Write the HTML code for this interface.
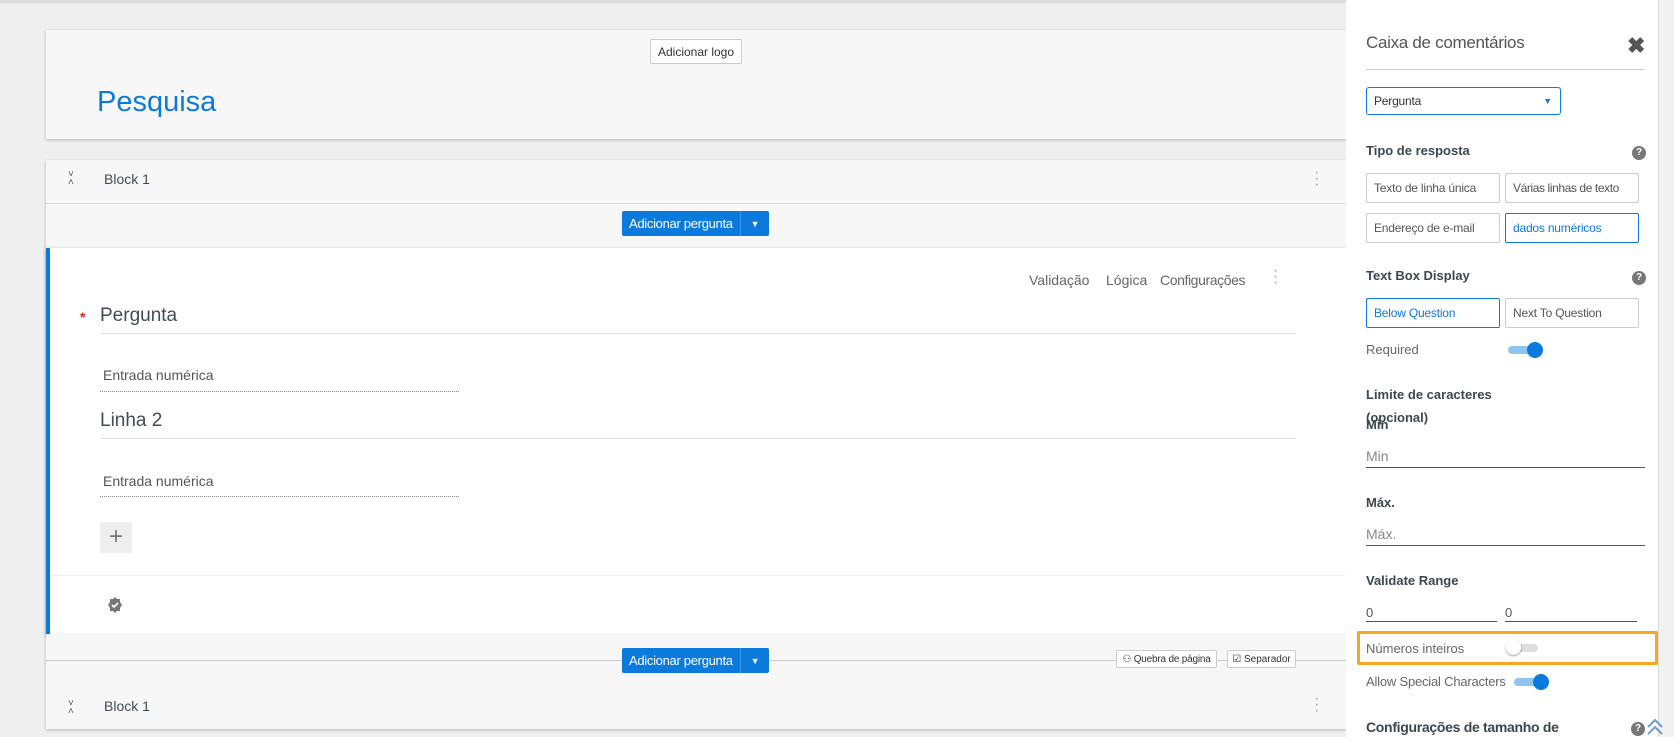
<!DOCTYPE html>
<html><head><meta charset="utf-8"><style>
*{box-sizing:border-box;margin:0;padding:0}
body{width:1674px;height:737px;overflow:hidden;background:#efefef;font-family:"Liberation Sans",sans-serif;color:#404b57;position:relative}
.a{position:absolute;white-space:nowrap}
.card{background:#f7f7f7;box-shadow:0 1px 3px rgba(0,0,0,.25)}
.btn{background:#fff;border:1px solid #ccc;border-radius:2px;font-size:12px;color:#333;display:flex;align-items:center;justify-content:center}
.add{background:#0a7bdc;color:#fff;font-size:13px;border-radius:2px;display:flex;align-items:center}
.lbl{font-size:13px;font-weight:bold;color:#3c4650}
.opt{border:1px solid #ccc;border-radius:2px;font-size:12px;color:#555;padding-left:7px;display:flex;align-items:center;background:#fff;letter-spacing:-.2px}
.sel{border-color:#0a7bdc;color:#0a7bdc}
.q{width:14px;height:14px;border-radius:50%;background:#777;color:#fff;font-size:10px;font-weight:bold;text-align:center;line-height:14px}
.line{height:1px;background:#555}
.ph{font-size:14px;color:#888}
</style></head><body>
<div class="a" style="left:0;top:0;width:1674px;height:3px;background:#ddd"></div>
<div class="a card" style="left:46px;top:30px;width:1300px;height:109px"></div>
<div class="a btn" style="left:650px;top:39px;width:92px;height:25px">Adicionar logo</div>
<div class="a" style="left:97px;top:86px;font-size:29px;color:#0a7bdc">Pesquisa</div>
<div class="a card" style="left:46px;top:160px;width:1300px;height:475px"></div>
<div class="a" style="left:46px;top:203px;width:1300px;height:1px;background:#ddd"></div>
<div class="a" style="left:68px;top:171px;font-size:10px;line-height:8px;color:#555">˅<br>˄</div>
<div class="a" style="left:104px;top:171px;font-size:14px">Block 1</div>
<div class="a" style="left:1314px;top:170px;width:3px;line-height:6px;font-size:16px;color:#aaa">·<br>·<br>·</div>
<div class="a add" style="left:622px;top:211px;width:147px;height:25px;letter-spacing:-.3px"><span style="padding:0 7px;border-right:1px solid #3a95e4;line-height:25px">Adicionar pergunta</span><span style="flex:1;text-align:center;font-size:9px">▼</span></div>
<div class="a" style="left:46px;top:248px;width:1300px;height:386px;background:#fff;border-left:4px solid #0a7bdc;box-shadow:0 1px 3px rgba(0,0,0,.3)"></div>
<div class="a" style="left:1029px;top:272px;font-size:14px;color:#666">Validação</div>
<div class="a" style="left:1106px;top:272px;font-size:14px;color:#666">Lógica</div>
<div class="a" style="left:1160px;top:272px;font-size:14px;color:#666;letter-spacing:-.4px">Configurações</div>
<div class="a" style="left:1273px;top:268px;width:3px;line-height:6px;font-size:16px;color:#aaa">·<br>·<br>·</div>
<div class="a" style="left:80px;top:309px;color:#e22;font-size:14px;font-weight:bold">*</div>
<div class="a" style="left:100px;top:305px;font-size:19px">Pergunta</div>
<div class="a" style="left:100px;top:333px;width:1196px;height:1px;background:#e2e2e2"></div>
<div class="a" style="left:103px;top:367px;font-size:14px;color:#555">Entrada numérica</div>
<div class="a" style="left:100px;top:391px;width:359px;border-top:1px dotted #888"></div>
<div class="a" style="left:100px;top:410px;font-size:19px">Linha 2</div>
<div class="a" style="left:100px;top:438px;width:1196px;height:1px;background:#e2e2e2"></div>
<div class="a" style="left:103px;top:473px;font-size:14px;color:#555">Entrada numérica</div>
<div class="a" style="left:100px;top:496px;width:359px;border-top:1px dotted #888"></div>
<div class="a" style="left:100px;top:522px;width:32px;height:31px;background:#eee;color:#777;font-size:24px;text-align:center;line-height:30px">+</div>
<div class="a" style="left:50px;top:575px;width:1296px;height:1px;background:#eee"></div>
<svg class="a" style="left:107px;top:597px" width="16" height="16" viewBox="0 0 16 16"><path d="M8 0l2 2 3 0 0 3 2 3-2 3 0 3-3 0-2 2-2-2-3 0 0-3-2-3 2-3 0-3 3 0z" fill="#777"/><path d="M5 8l2 2 4-4" stroke="#fff" stroke-width="1.6" fill="none"/></svg>
<div class="a" style="left:46px;top:634px;width:1300px;height:95px;background:#f7f7f7;box-shadow:0 1px 3px rgba(0,0,0,.25)"></div>
<div class="a" style="left:46px;top:660px;width:1300px;height:1px;background:#ccc"></div>
<div class="a add" style="left:622px;top:648px;width:147px;height:25px;letter-spacing:-.3px"><span style="padding:0 7px;border-right:1px solid #3a95e4;line-height:25px">Adicionar pergunta</span><span style="flex:1;text-align:center;font-size:9px">▼</span></div>
<div class="a btn" style="left:1116px;top:650px;width:101px;height:18px;font-size:10px;letter-spacing:-.2px">⚇ Quebra de página</div>
<div class="a btn" style="left:1227px;top:650px;width:69px;height:18px;font-size:10px">☑ Separador</div>
<div class="a" style="left:68px;top:700px;font-size:10px;line-height:8px;color:#555">˅<br>˄</div>
<div class="a" style="left:104px;top:698px;font-size:14px">Block 1</div>
<div class="a" style="left:1314px;top:696px;width:3px;line-height:6px;font-size:16px;color:#aaa">·<br>·<br>·</div>
<div class="a" style="left:1346px;top:0;width:312px;height:737px;background:#fff"></div>
<div class="a" style="left:1658px;top:0;width:16px;height:737px;background:#f1f1f1;border-left:1px solid #ddd"></div>
<div class="a" style="left:1366px;top:33px;font-size:17px;color:#555;letter-spacing:-.3px">Caixa de comentários</div>
<div class="a" style="left:1627px;top:33px;font-size:22px;color:#555;font-weight:bold">✖</div>
<div class="a" style="left:1366px;top:69px;width:279px;height:1px;background:#ccc"></div>
<div class="a opt sel" style="left:1366px;top:87px;width:195px;height:28px;color:#333;border-radius:3px">Pergunta<span style="position:absolute;right:8px;color:#0a7bdc;font-size:9px">▼</span></div>
<div class="a lbl" style="left:1366px;top:143px">Tipo de resposta</div>
<div class="a q" style="left:1632px;top:146px">?</div>
<div class="a opt" style="left:1366px;top:173px;width:134px;height:30px">Texto de linha única</div>
<div class="a opt" style="left:1505px;top:173px;width:134px;height:30px;letter-spacing:-.4px">Várias linhas de texto</div>
<div class="a opt" style="left:1366px;top:213px;width:134px;height:30px">Endereço de e-mail</div>
<div class="a opt sel" style="left:1505px;top:213px;width:134px;height:30px">dados numéricos</div>
<div class="a lbl" style="left:1366px;top:268px">Text Box Display</div>
<div class="a q" style="left:1632px;top:271px">?</div>
<div class="a opt sel" style="left:1366px;top:298px;width:134px;height:30px">Below Question</div>
<div class="a opt" style="left:1505px;top:298px;width:134px;height:30px">Next To Question</div>
<div class="a" style="left:1366px;top:342px;font-size:13px;color:#666">Required</div>
<div class="a" style="left:1508px;top:346px;width:32px;height:8px;border-radius:4px;background:#8ec5ef"></div>
<div class="a" style="left:1527px;top:342px;width:16px;height:16px;border-radius:50%;background:#0a7bdc"></div>
<div class="a lbl" style="left:1366px;top:387px">Limite de caracteres</div>
<div class="a lbl" style="left:1366px;top:410px">(opcional)</div>
<div class="a lbl" style="left:1366px;top:417px">Min</div>
<div class="a ph" style="left:1366px;top:448px">Min</div>
<div class="a line" style="left:1366px;top:467px;width:279px"></div>
<div class="a lbl" style="left:1366px;top:495px">Máx.</div>
<div class="a ph" style="left:1366px;top:526px">Máx.</div>
<div class="a line" style="left:1366px;top:545px;width:279px"></div>
<div class="a lbl" style="left:1366px;top:573px">Validate Range</div>
<div class="a" style="left:1366px;top:605px;font-size:13px;color:#555">0</div>
<div class="a line" style="left:1366px;top:621px;width:131px"></div>
<div class="a" style="left:1505px;top:605px;font-size:13px;color:#555">0</div>
<div class="a line" style="left:1505px;top:621px;width:132px"></div>
<div class="a" style="left:1357px;top:631px;width:301px;height:34px;border:3px solid #f5a623;border-radius:2px"></div>
<div class="a" style="left:1366px;top:641px;font-size:13px;color:#666">Números inteiros</div>
<div class="a" style="left:1507px;top:644px;width:31px;height:8px;border-radius:4px;background:#ddd"></div>
<div class="a" style="left:1506px;top:640px;width:15px;height:15px;border-radius:50%;background:#fff;box-shadow:0 1px 2px rgba(0,0,0,.4)"></div>
<div class="a" style="left:1366px;top:674px;font-size:13px;color:#666;letter-spacing:-.2px">Allow Special Characters</div>
<div class="a" style="left:1514px;top:678px;width:32px;height:8px;border-radius:4px;background:#8ec5ef"></div>
<div class="a" style="left:1533px;top:674px;width:16px;height:16px;border-radius:50%;background:#0a7bdc"></div>
<div class="a lbl" style="left:1366px;top:719px;font-size:14px;letter-spacing:-.3px">Configurações de tamanho de</div>
<div class="a q" style="left:1631px;top:722px">?</div>
<svg class="a" style="left:1645px;top:716px" width="20" height="20" viewBox="0 0 20 20"><path d="M3 11l7-7 7 7M3 18l7-7 7 7" stroke="#6a9ccc" stroke-width="2" fill="none"/></svg>
</body></html>
